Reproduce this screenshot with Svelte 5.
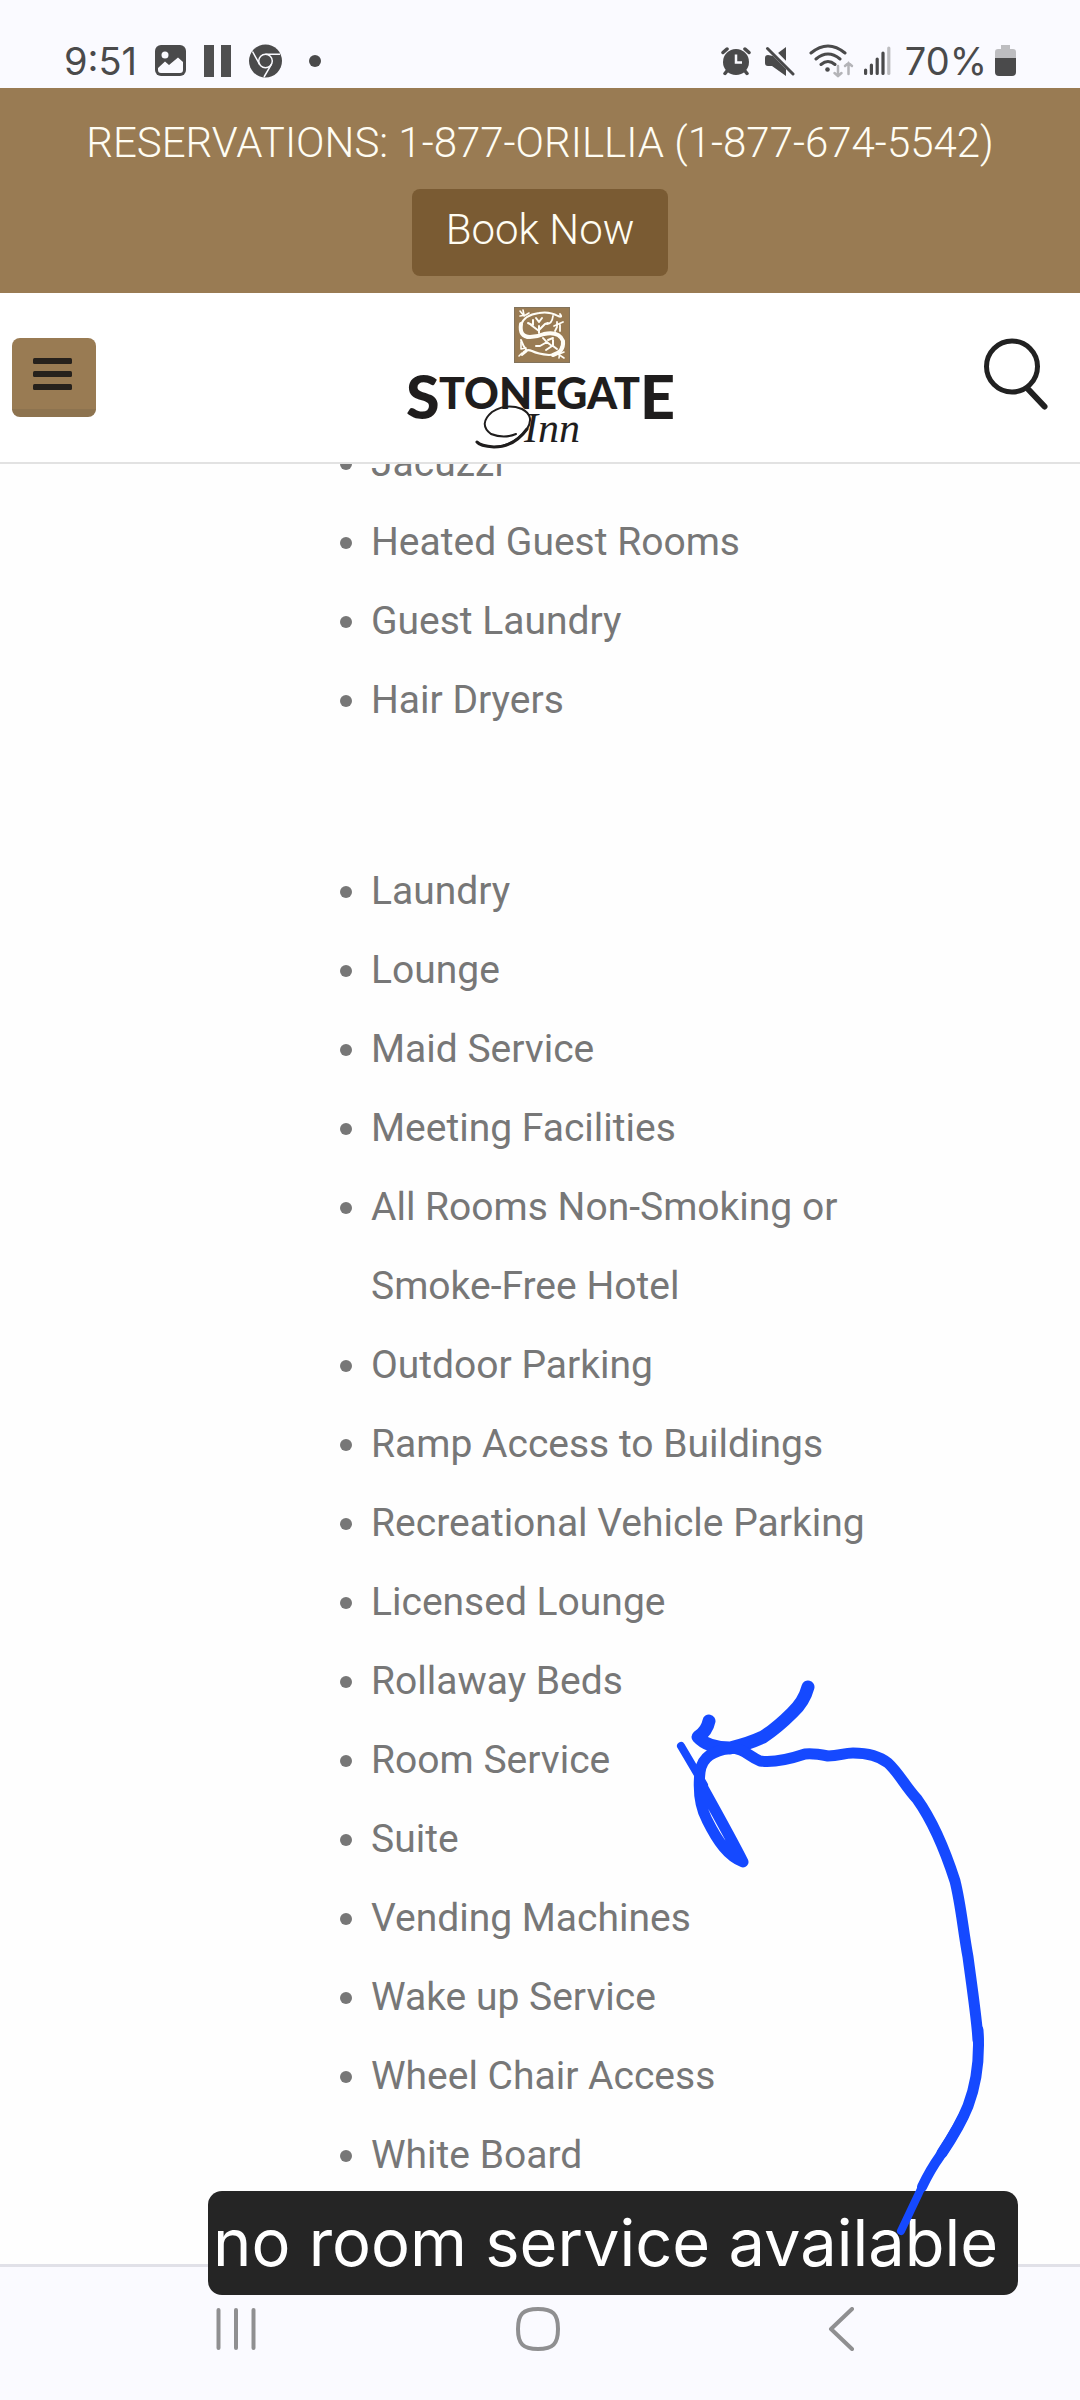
<script>
  const amenities = ['Jacuzzi', 'Heated Guest Rooms', 'Guest Laundry', 'Hair Dryers'];
  const services = [
    'Laundry',
    'Lounge',
    'Maid Service',
    'Meeting Facilities',
    'All Rooms Non-Smoking or Smoke-Free Hotel',
    'Outdoor Parking',
    'Ramp Access to Buildings',
    'Recreational Vehicle Parking',
    'Licensed Lounge',
    'Rollaway Beds',
    'Room Service',
    'Suite',
    'Vending Machines',
    'Wake up Service',
    'Wheel Chair Access',
    'White Board'
  ];
</script>

<div class="screen">
  <div class="status">
    <div class="group left">
      <span class="clock">9:51</span>
      <svg width="31" height="34" viewBox="0 0 31 34" aria-hidden="true">
        <rect x="0" y="1" width="31" height="31" rx="6" fill="#4a4a4b" />
        <circle cx="10" cy="11" r="3.500" fill="#fafaff" />
        <path d="M3 24 L10 17.500 L14 21 L23 13.500 L28 18 V26 Q28 29 25 29 H6 Q3 29 3 26Z" fill="#fafaff" />
      </svg>
      <svg width="27" height="34" viewBox="0 0 27 34" aria-hidden="true">
        <path d="M0 1h10v32H0zM17 1h10v32H17z" fill="#4f4f50" />
      </svg>
      <svg width="33" height="34" viewBox="0 0 33 34" aria-hidden="true">
        <circle cx="16.500" cy="17" r="16.500" fill="#4a4a4b" />
        <g fill="none" stroke="#fafaff" stroke-width="1.500">
          <circle cx="16.500" cy="17" r="6.800" />
          <path d="M16.500 10.200H31M10.600 20.400L3.500 7.500M22.400 20.400L15 33" />
        </g>
      </svg>
      <svg width="22" height="34" viewBox="0 0 22 34" aria-hidden="true">
        <circle cx="15" cy="17" r="6" fill="#4a4a4b" />
      </svg>
    </div>
    <div class="group right">
      <svg width="30" height="34" viewBox="0 0 30 34" aria-hidden="true">
        <g fill="none" stroke="#4a4a4b" stroke-width="3.500" stroke-linecap="round">
          <path d="M2 8.500L6 5M28 8.500L24 5M6 27L4 29.500M24 27L26 29.500" />
        </g>
        <circle cx="15" cy="18" r="13" fill="#4a4a4b" />
        <path d="M15 10.500V18.500H21" fill="none" stroke="#fafaff" stroke-width="2.500" />
      </svg>
      <svg width="30" height="34" viewBox="0 0 30 34" aria-hidden="true">
        <path d="M13 9L21 3V17ZM3 11Q0 11 0 14V19Q0 22 3 22H7L21 32V25L8 12Z" fill="#4a4a4b" />
        <path d="M5 3L30 28" stroke="#fafaff" stroke-width="2.500" />
        <path d="M2.500 4.500L28 30" stroke="#4a4a4b" stroke-width="3" stroke-linecap="round" />
      </svg>
      <svg class="wifi" width="45" height="34" viewBox="0 0 45 34" aria-hidden="true">
        <g fill="none" stroke="#4a4a4b" stroke-width="3" stroke-linecap="round">
          <path d="M2 9Q19 -5 36 9M7 15Q19 5 31 15M12 20.500Q19 14.500 26 20.500" />
        </g>
        <circle cx="18.500" cy="25.500" r="2.300" fill="#4a4a4b" />
        <path d="M29 22V32M25.500 29L29 32L32.500 29M39.500 30V19M36 22L39.500 19L43 22" fill="none" stroke="#b4b4b8" stroke-width="2.500" stroke-linecap="round" />
      </svg>
      <svg width="27" height="34" viewBox="0 0 27 34" aria-hidden="true">
        <g stroke="#4a4a4b" stroke-width="3.200" stroke-linecap="round">
          <path d="M1.600 26V29.500M7.400 21V29.500M13.200 15V29.500M19 9V29.500" />
          <path d="M24.800 4V29.500" stroke="#bdbdc0" />
        </g>
      </svg>
      <span class="clock battery">70%</span>
      <svg width="21" height="34" viewBox="0 0 21 34" aria-hidden="true">
        <path d="M6 1H15V5H18Q21 5 21 8V14H0V8Q0 5 3 5H6Z" fill="#bdbdc0" />
        <path d="M0 14H21V28Q21 32 17 32H4Q0 32 0 28Z" fill="#4a4a4b" />
      </svg>
    </div>
  </div>

  <div class="reserve">
    <a class="phone" href="tel:18776745542">RESERVATIONS: 1-877-ORILLIA (1-877-674-5542)</a>
    <button class="book" type="button">Book Now</button>
  </div>

  <header class="header">
    <button class="menu" type="button" aria-label="Menu">
      <svg width="39" height="32" viewBox="0 0 39 32" aria-hidden="true">
        <g fill="#26211c">
          <rect width="39" height="6" rx="1.500" />
          <rect y="13" width="39" height="6" rx="1.500" />
          <rect y="26" width="39" height="6" rx="1.500" />
        </g>
      </svg>
    </button>

    <a class="logo" href="/" aria-label="Stonegate Inn">
      <svg width="268" height="150" viewBox="0 0 268 150">
        <rect x="108.500" y="3.500" width="55" height="55" fill="#997b53" stroke="#82735c" />
        <g fill="none" stroke="#fffdf6" stroke-linecap="round" stroke-linejoin="round">
          <path d="M154 10Q157 14 152 12Q143 7 133 9Q118 11 115 21Q113 31 122 34" stroke-width="2" />
          <path d="M115 20Q113 33 124 33Q131 33 138 30Q153 27 157 37Q158 48 147 51" stroke-width="4" />
          <path d="M156 42Q154 51 143 51Q132 50 126 47Q119 44 116 51L121 47Q117 42 115 36" stroke-width="2" />
          <path d="M133 29V22M133 27L125 21M133 26L139 20M126 21L122 19M127 21V16M133 18L130 14M133 18L136 14M139 20L142 19" stroke-width="2" />
          <path d="M137 34Q140 38 146 42M141 38L134 42L130 42M146 42L140 46M147 42L151 45M147 41V36M142 36L147 34" stroke-width="2" />
          <path d="M147 12Q146 20 141 20M148 22L157 18M151 23L149 27M154 21V27M151 18V22" stroke-width="1.800" />
          <path d="M114 7L118 12L123 9M114 12L120 11M117 6L118 11" stroke-width="1.600" />
          <path d="M115 38V45L120 44M116 49L113 52M152 50L158 54M154 47L153 54M158 48L153 50" stroke-width="1.600" />
        </g>
        <g class="name">
          <text class="cap" x="0" y="115">S</text>
          <text x="33" y="105">TONEGAT</text>
          <text class="cap" x="234" y="115">E</text>
        </g>
        <g fill="none" stroke="#1f1d1d" stroke-linecap="round">
          <path d="M110 130Q98 135 85 130Q72 120 86 108Q100 99 116 105Q129 112 121 125Q108 142 88 143" stroke-width="2" />
          <path d="M121 125Q108 143 88 143Q74 142 71 138" stroke-width="3" />
        </g>
        <text class="script" x="118" y="138">Inn</text>
      </svg>
    </a>

    <button class="search" type="button" aria-label="Search">
      <svg width="66" height="82" viewBox="0 0 66 82" aria-hidden="true">
        <circle cx="29" cy="29.500" r="25.500" fill="none" stroke="#212121" stroke-width="5" />
        <path d="M45 52L61.500 69.500" stroke="#212121" stroke-width="6" stroke-linecap="round" />
      </svg>
    </button>
  </header>

  <main class="content">
    <ul class="list">
      {#each amenities as item}
        <li><span>{item}</span></li>
      {/each}
    </ul>
    <ul class="list">
      {#each services as item}
        <li><span>{item}</span></li>
      {/each}
    </ul>
  </main>

  <nav class="nav" aria-label="System navigation">
    <button type="button" aria-label="Recent apps">
      <svg width="40" height="44" viewBox="0 0 40 44">
        <path d="M2.500 3V41M20 3V41M37.500 3V41" />
      </svg>
    </button>
    <button type="button" aria-label="Home">
      <svg width="52" height="44" viewBox="0 0 52 44">
        <path d="M22 2C37 2 42 7 42 22S37 42 22 42S2 37 2 22S7 2 22 2Z" />
      </svg>
    </button>
    <button type="button" aria-label="Back">
      <svg width="32" height="44" viewBox="0 0 32 44">
        <path d="M24 2L3 22L24 42" />
      </svg>
    </button>
  </nav>

  <div class="caption">no room service available</div>

  <svg class="arrow" width="320" height="560" viewBox="670 1680 320 560" aria-hidden="true">
    <path stroke-width="13" d="M808 1687Q804 1702 792 1713Q777 1728 763 1737Q748 1744 730 1748Q708 1748 698 1737Q707 1731 709 1721" />
    <path stroke-width="11" d="M978 2040C977 2020 971 1980 968 1957C963 1930 961 1905 955 1881C945 1850 932 1820 917 1799C905 1786 899 1773 888 1763C878 1755 865 1753 853 1753C843 1753 840 1756 828 1756C818 1754 812 1753 805 1754C790 1759 775 1763 760 1761C748 1756 744 1748 730 1748C714 1751 702 1756 700 1772C698 1790 699 1805 707 1820C718 1842 728 1856 743 1862C733 1842 718 1815 703 1788" />
    <path stroke-width="11" d="M978 2030C980 2060 976 2085 968 2106Q960 2126 942 2153" />
    <path stroke-width="10" d="M964 2115Q956 2131 940 2156Q930 2170 922 2187" />
    <path stroke-width="8" d="M936 2162Q927 2175 919 2193L901 2231M681 1746L704 1785" />
  </svg>
</div>

<style>
  :global(body) {
    margin: 0;
    background: #fefefe;
  }

  .screen {
    position: relative;
    display: flex;
    flex-direction: column;
    min-height: 100vh;
    overflow: hidden;
    font-family: Roboto, "Liberation Sans", sans-serif;
    color: #777;
  }

  button {
    border: 0;
    padding: 0;
    background: none;
    font: inherit;
    color: inherit;
    cursor: pointer;
  }

  svg {
    display: block;
  }

  .status {
    display: flex;
    justify-content: space-between;
    padding: 44px 64px 10px;
    background: #fafaff;
  }

  .group {
    display: flex;
    align-items: center;
    height: 34px;
  }

  .left {
    gap: 18px;
  }

  .right {
    gap: 14px;
  }

  .clock {
    font: 38px/34px Inter, "Liberation Sans", sans-serif;
    color: #4a4a4b;
  }

  .wifi {
    margin-right: -4px;
  }

  .battery {
    margin-right: -6px;
  }

  .reserve {
    display: flex;
    flex-direction: column;
    align-items: center;
    gap: 20px;
    padding: 28px 16px 17px;
    background: #997b53;
    font-size: 42px;
    font-weight: 300;
    line-height: 53px;
    color: #fffdf3;
  }

  .phone {
    color: inherit;
    text-decoration: none;
  }

  .book {
    padding: 14px 34px 20px;
    border-radius: 8px;
    background: #7a5b33;
  }

  .header {
    display: flex;
    align-items: center;
    justify-content: space-between;
    height: 169px;
    padding: 0 31px 0 12px;
    border-bottom: 2px solid #e2e2e2;
    background: #fff;
    position: relative;
    z-index: 1;
  }

  .menu {
    display: flex;
    align-items: center;
    width: 84px;
    height: 79px;
    padding-left: 21px;
    border-bottom: 8px solid #8d734f;
    border-radius: 8px;
    background: #997b53;
  }

  .logo {
    position: absolute;
    left: 50%;
    top: 11px;
    transform: translateX(-50%);
  }

  .name {
    font: 900 43px Lato, sans-serif;
    fill: #1f1d1d;
  }

  .cap {
    font-size: 61px;
  }

  .script {
    font: italic 42px "Liberation Serif", serif;
    fill: #1f1d1d;
  }

  .content {
    flex: 1;
    display: flex;
    flex-direction: column;
    gap: 112px;
    margin-top: -40px;
    padding: 0 120px 0 340px;
  }

  .list {
    margin: 0;
    padding: 0;
    list-style: none;
    font-size: 39px;
    line-height: 79px;
  }

  .list li {
    display: flex;
    gap: 19px;
  }

  .list li::before {
    content: "";
    flex: none;
    width: 12px;
    height: 12px;
    margin-top: 34px;
    border-radius: 50%;
    background: #777;
  }

  .nav {
    display: flex;
    justify-content: space-between;
    padding: 40px 220px 49px 216px;
    border-top: 3px solid #e1e1e8;
    background: #fafaff;
  }

  .nav path {
    fill: none;
    stroke: #8f8f91;
    stroke-width: 4;
    stroke-linecap: round;
    stroke-linejoin: round;
  }

  .caption {
    position: absolute;
    right: 62px;
    bottom: 105px;
    left: 208px;
    box-sizing: border-box;
    padding: 0 5px;
    border-radius: 14px;
    background: #252525;
    font: 65px/104px Inter, "Liberation Sans", sans-serif;
    color: #fff;
    white-space: nowrap;
  }

  .arrow {
    position: absolute;
    right: 90px;
    bottom: 160px;
    fill: none;
    stroke: #1549ff;
    stroke-linecap: round;
    stroke-linejoin: round;
  }
</style>
